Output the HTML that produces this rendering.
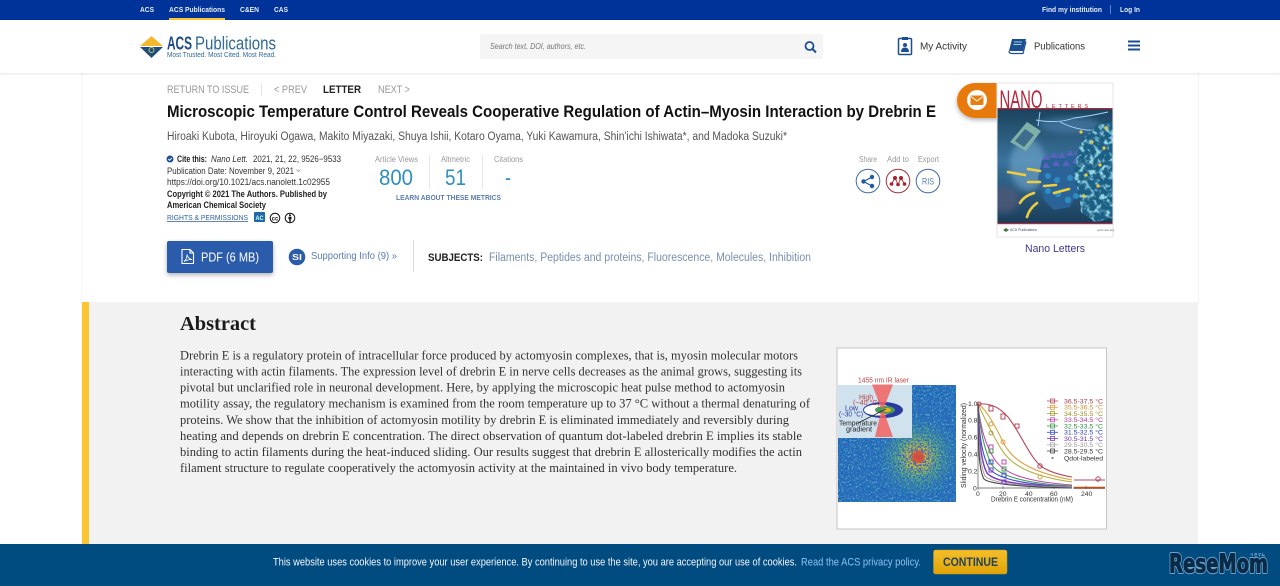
<!DOCTYPE html>
<html lang="en"><head><meta charset="utf-8"><title>Nano Letters</title>
<style>
html,body{margin:0;padding:0;background:#fff;width:1280px;height:586px;overflow:hidden}
svg{display:block;position:absolute;left:0;top:0}
text{font-family:"Liberation Sans","Noto Sans CJK JP",sans-serif;white-space:pre}
.s{font-family:"Liberation Serif",serif}
</style></head><body>
<svg width="1280" height="586" viewBox="0 0 1280 586" xmlns="http://www.w3.org/2000/svg">
<defs>
<filter id="noise" x="0" y="0" width="100%" height="100%">
<feTurbulence type="fractalNoise" baseFrequency="0.6" numOctaves="2" seed="4"/>
<feColorMatrix values="0 0 0 0 .03  0 0 0 0 .12  0 0 0 0 .55  3.4 0 0 0 -1.25"/>
</filter>
<filter id="noise2" x="0" y="0" width="100%" height="100%">
<feTurbulence type="fractalNoise" baseFrequency="0.5" numOctaves="2" seed="11"/>
<feColorMatrix values="0 0 0 0 .2  0 0 0 0 .72  0 0 0 0 .55  2.2 0 0 0 -0.95"/>
</filter>
<filter id="cn" x="0" y="0" width="100%" height="100%">
<feTurbulence type="fractalNoise" baseFrequency="0.2" numOctaves="2" seed="7"/>
<feColorMatrix values="0 0 0 0 .3  0 0 0 0 .7  0 0 0 0 .8  4 0 0 0 -1.9"/>
</filter>
<filter id="sh" x="-20%" y="-20%" width="140%" height="150%"><feDropShadow dx="0" dy="2" stdDeviation="2.500" flood-color="#000" flood-opacity=".3"/></filter>
<filter id="bl"><feGaussianBlur stdDeviation="3"/></filter>
<filter id="bl1"><feGaussianBlur stdDeviation=".8"/></filter>
<filter id="bl2"><feGaussianBlur stdDeviation=".35"/></filter>
<radialGradient id="hot" gradientUnits="userSpaceOnUse" cx="918" cy="457" r="42">
<stop offset="0" stop-color="#e8302a"/><stop offset=".1" stop-color="#ea8a30"/><stop offset=".25" stop-color="#d8cc30" stop-opacity=".95"/><stop offset=".5" stop-color="#70c860" stop-opacity=".75"/><stop offset="1" stop-color="#30a090" stop-opacity="0"/>
</radialGradient>
<linearGradient id="art" x1="0" y1="0" x2="0" y2="1"><stop offset="0" stop-color="#1a425c"/><stop offset=".45" stop-color="#39729c"/><stop offset="1" stop-color="#1a3e5a"/></linearGradient>
<linearGradient id="gold" x1="0" y1="0" x2="0" y2="1"><stop offset="0" stop-color="#f5bf2a"/><stop offset="1" stop-color="#e0a308"/></linearGradient>
<clipPath id="cl"><path d="M1078 150 q4-14 12-18 l8-8 l15-2 v96 l-18 4 -14-10 -2-20 -6-14z"/></clipPath>
<clipPath id="artc"><rect x="997.500" y="108.500" width="115" height="115"/></clipPath>
</defs>

<!-- page frame -->
<rect x="0" y="0" width="1280" height="586" fill="#fff"/>
<rect x="81.500" y="73" width="1" height="472" fill="#f4f4f4"/>
<rect x="1198" y="73" width="1" height="230" fill="#f4f4f4"/>
<rect x="82" y="302" width="1116" height="242" fill="#f2f2f2"/>
<rect x="82" y="302" width="7" height="242" fill="#fdc52f"/>

<!-- header -->
<rect x="0" y="71" width="1280" height="4" fill="#000" opacity=".06" filter="url(#bl1)"/>
<rect x="0" y="20" width="1280" height="53" fill="#fff"/>
<rect x="0" y="0" width="1280" height="20" fill="#003399"/>
<g fill="#e6ecf8" font-size="7.500" font-weight="bold">
<text x="140" y="12" textLength="14" lengthAdjust="spacingAndGlyphs">ACS</text>
<text x="169" y="12" textLength="56" lengthAdjust="spacingAndGlyphs">ACS Publications</text>
<text x="240" y="12" textLength="19" lengthAdjust="spacingAndGlyphs">C&amp;EN</text>
<text x="274" y="12" textLength="14" lengthAdjust="spacingAndGlyphs">CAS</text>
<text x="1042" y="12" textLength="60" lengthAdjust="spacingAndGlyphs">Find my institution</text>
<text x="1120" y="12" textLength="20" lengthAdjust="spacingAndGlyphs">Log In</text>
</g>
<rect x="169" y="18" width="56" height="2" fill="#fdc52f"/>
<rect x="1110" y="5" width="1" height="9" fill="#5f82c6"/>

<!-- logo -->
<path d="M140 46 L151.500 36 L163 46 Z" fill="#f3b92e"/>
<path d="M140 47 L163 47 L151.500 58 Z" fill="#1f4e79"/>
<circle cx="151.500" cy="50" r="2.500" fill="none" stroke="#b9c76a" stroke-width="1"/>
<text x="167" y="49.500" font-size="18" font-weight="bold" fill="#1f4e86" textLength="25" lengthAdjust="spacingAndGlyphs">ACS</text>
<text x="195" y="49.500" font-size="18" fill="#2f6a98" textLength="81" lengthAdjust="spacingAndGlyphs">Publications</text>
<text x="167" y="57" font-size="7" fill="#2f6a98" textLength="109" lengthAdjust="spacingAndGlyphs">Most Trusted. Most Cited. Most Read.</text>

<!-- search -->
<rect x="480" y="34" width="343" height="25" rx="2" fill="#f5f5f5"/>
<text x="490" y="49" font-size="8" font-style="italic" fill="#777" textLength="96" lengthAdjust="spacingAndGlyphs">Search text, DOI, authors, etc.</text>
<circle cx="809.500" cy="46" r="4" fill="none" stroke="#1b4f91" stroke-width="1.800"/>
<path d="M812.500 49 L816 52.500" stroke="#1b4f91" stroke-width="2"/>

<!-- my activity -->
<path d="M899.500 38.500h11a1 1 0 0 1 1 1v14a1 1 0 0 1-1 1h-11a1 1 0 0 1-1-1v-14a1 1 0 0 1 1-1z" fill="none" stroke="#1b4f91" stroke-width="1.500"/>
<rect x="902" y="37" width="6" height="3" fill="#1b4f91"/>
<circle cx="905" cy="45" r="2" fill="#1b4f91"/>
<path d="M901 52 q0-4.500 4-4.500 t4 4.500z" fill="#1b4f91"/>
<text x="920" y="49.500" font-size="10.500" fill="#333" textLength="47" lengthAdjust="spacingAndGlyphs">My Activity</text>
<path d="M1012 39 h14 l-3 12 h-14 z" fill="#1b4f91"/>
<path d="M1009 51 q0 2.500 3 2.500 h11 l3-12" fill="none" stroke="#1b4f91" stroke-width="1.200"/>
<path d="M1014 42h8M1013.500 44.500h8" stroke="#cfe" stroke-width=".8"/>
<text x="1034" y="49.500" font-size="10.500" fill="#333" textLength="51" lengthAdjust="spacingAndGlyphs">Publications</text>
<path d="M1128 41.500h12M1128 45.500h12M1128 49.500h12" stroke="#1b4f91" stroke-width="2"/>

<!-- breadcrumb -->
<g font-size="11" fill="#999">
<text x="167" y="93" textLength="82" lengthAdjust="spacingAndGlyphs">RETURN TO ISSUE</text>
<text x="274" y="93" textLength="33" lengthAdjust="spacingAndGlyphs">&lt; PREV</text>
<text x="378" y="93" textLength="32" lengthAdjust="spacingAndGlyphs">NEXT &gt;</text>
</g>
<rect x="261" y="83" width="1" height="13" fill="#e6e6e6"/>
<text x="323" y="93" font-size="11" font-weight="bold" fill="#222" textLength="38" lengthAdjust="spacingAndGlyphs">LETTER</text>

<!-- title -->
<text x="167" y="117" font-size="16.500" font-weight="bold" fill="#111" textLength="769" lengthAdjust="spacingAndGlyphs">Microscopic Temperature Control Reveals Cooperative Regulation of Actin–Myosin Interaction by Drebrin E</text>
<text x="167" y="140" font-size="11.500" fill="#555" textLength="620" lengthAdjust="spacingAndGlyphs">Hiroaki Kubota, Hiroyuki Ogawa, Makito Miyazaki, Shuya Ishii, Kotaro Oyama, Yuki Kawamura, Shin'ichi Ishiwata*, and Madoka Suzuki*</text>

<!-- citation -->
<circle cx="170" cy="159" r="3.500" fill="#1f4e9a"/>
<path d="M168.300 159 l1.300 1.300 l2.200-2.400" fill="none" stroke="#fff" stroke-width=".9"/>
<g font-size="9" fill="#333">
<text x="177" y="162" font-weight="bold" fill="#222" textLength="30" lengthAdjust="spacingAndGlyphs">Cite this:</text>
<text x="211" y="162" font-style="italic" textLength="37" lengthAdjust="spacingAndGlyphs">Nano Lett.</text>
<text x="253" y="162" textLength="88" lengthAdjust="spacingAndGlyphs">2021, 21, 22, 9526−9533</text>
<text x="167" y="174" textLength="127" lengthAdjust="spacingAndGlyphs">Publication Date: November 9, 2021</text>
<text x="167" y="185" textLength="163" lengthAdjust="spacingAndGlyphs">https://doi.org/10.1021/acs.nanolett.1c02955</text>
<text x="167" y="197" font-weight="bold" fill="#222" textLength="160" lengthAdjust="spacingAndGlyphs">Copyright © 2021 The Authors. Published by</text>
<text x="167" y="208" font-weight="bold" fill="#222" textLength="99" lengthAdjust="spacingAndGlyphs">American Chemical Society</text>
</g>
<path d="M296.500 169.500l2 2 2-2" fill="none" stroke="#888" stroke-width=".7"/>
<text x="167" y="220" font-size="7.500" fill="#2f5f9e" text-decoration="underline" textLength="81" lengthAdjust="spacingAndGlyphs">RIGHTS &amp; PERMISSIONS</text>
<rect x="254" y="212" width="11" height="10" rx="1" fill="#1d6aa5"/>
<text x="255.500" y="220" font-size="6.500" font-weight="bold" fill="#dff" textLength="8" lengthAdjust="spacingAndGlyphs">AC</text>
<circle cx="275" cy="218" r="4.800" fill="#fff" stroke="#111" stroke-width="1"/>
<text x="271.800" y="220.300" font-size="6" font-weight="bold" fill="#111" textLength="6.400" lengthAdjust="spacingAndGlyphs">cc</text>
<circle cx="290" cy="218" r="4.800" fill="#fff" stroke="#111" stroke-width="1"/>
<circle cx="290" cy="215.300" r="1" fill="#111"/><path d="M288.500 216.800h3v2.500h-.8v2.800h-1.400v-2.800h-.8z" fill="#111"/>

<!-- metrics -->
<g font-size="8.500" fill="#999">
<text x="375" y="162" textLength="43" lengthAdjust="spacingAndGlyphs">Article Views</text>
<text x="441" y="162" textLength="29" lengthAdjust="spacingAndGlyphs">Altmetric</text>
<text x="494" y="162" textLength="29" lengthAdjust="spacingAndGlyphs">Citations</text>
</g>
<g font-size="22.500" fill="#2f8fc0">
<text x="379" y="185" textLength="34" lengthAdjust="spacingAndGlyphs">800</text>
<text x="445" y="185" textLength="21" lengthAdjust="spacingAndGlyphs">51</text>
<text x="505" y="185" textLength="6" lengthAdjust="spacingAndGlyphs">-</text>
</g>
<rect x="429" y="154" width="1" height="36" fill="#e8e8e8"/>
<rect x="482" y="154" width="1" height="36" fill="#e8e8e8"/>
<text x="396" y="200" font-size="7.500" font-weight="bold" fill="#4a6fa8" opacity=".9" textLength="105" lengthAdjust="spacingAndGlyphs">LEARN ABOUT THESE METRICS</text>

<!-- share/add/export -->
<g font-size="8" fill="#999">
<text x="859" y="162" textLength="18" lengthAdjust="spacingAndGlyphs">Share</text>
<text x="887" y="162" textLength="22" lengthAdjust="spacingAndGlyphs">Add to</text>
<text x="918" y="162" textLength="21" lengthAdjust="spacingAndGlyphs">Export</text>
</g>
<circle cx="868" cy="181" r="11.800" fill="#fff" stroke="#3f6ea8" stroke-width="1"/>
<circle cx="898" cy="181" r="11.800" fill="#fff" stroke="#a83238" stroke-width="1"/>
<circle cx="928" cy="181" r="11.800" fill="#fff" stroke="#3f6ea8" stroke-width="1"/>
<g fill="#1f5aa0" stroke="#1f5aa0"><path d="M872 177 L863.500 181.500 L872 186" fill="none" stroke-width="1.200"/><circle cx="872" cy="177" r="1.700"/><circle cx="863.500" cy="181.500" r="1.700"/><circle cx="872" cy="186" r="1.700"/></g>
<g fill="#a61f2a"><circle cx="895" cy="178" r="2"/><circle cx="901" cy="178" r="2"/><circle cx="891.500" cy="184" r="1.800"/><circle cx="898" cy="184.500" r="1.800"/><circle cx="904.500" cy="184" r="1.800"/></g>
<path d="M895 178L891.500 184M895 178L898 184.500M901 178L898 184.500M901 178L904.500 184" stroke="#a61f2a" stroke-width=".8"/>
<text x="922" y="184.500" font-size="9.500" fill="#557aa8" textLength="12" lengthAdjust="spacingAndGlyphs">RIS</text>

<!-- pdf btn -->
<rect x="167" y="241" width="106" height="32" rx="2" fill="#2a5cab" filter="url(#sh)"/>
<path d="M182 249.500h8l3.500 3.500v10.500h-11.500z M190 249.500v3.500h3.500" fill="none" stroke="#fff" stroke-width="1.100"/>
<path d="M184 261.500c2-1.500 3-4 3-7 .6 3 2 4.500 5 5-3 0-5.500.6-8 2z" fill="none" stroke="#fff" stroke-width=".8"/>
<text x="201" y="261.500" font-size="13" fill="#fff" textLength="58" lengthAdjust="spacingAndGlyphs">PDF (6 MB)</text>
<circle cx="297" cy="257" r="8.300" fill="#2a5cab"/>
<text x="292" y="260" font-size="8" font-weight="bold" fill="#fff" textLength="10" lengthAdjust="spacingAndGlyphs">SI</text>
<text x="311" y="259" font-size="10.500" fill="#5a7cb0" textLength="86" lengthAdjust="spacingAndGlyphs">Supporting Info (9) »</text>
<rect x="413" y="240" width="1" height="32" fill="#dcdcdc"/>
<text x="428" y="261" font-size="11" font-weight="bold" fill="#222" textLength="55" lengthAdjust="spacingAndGlyphs">SUBJECTS:</text>
<text x="489" y="261" font-size="11.500" fill="#7890b0" textLength="322" lengthAdjust="spacingAndGlyphs">Filaments, Peptides and proteins, Fluorescence, Molecules, Inhibition</text>

<!-- cover -->
<path d="M975 83 h26 v35 h-26 a18 17.500 0 0 1 0-35z" fill="#e87a08" filter="url(#sh)"/>
<rect x="997" y="83" width="116" height="154" fill="#fff" stroke="#e6e6e6" stroke-width="1"/>
<circle cx="977" cy="100" r="10" fill="#fff"/>
<rect x="970.500" y="95.500" width="13" height="9.500" rx="1" fill="#ea7d10"/>
<path d="M971 96.500l6 4.500 6-4.500" fill="none" stroke="#fff" stroke-width="1"/>
<text x="999.500" y="108" font-size="25" fill="#b8253a" textLength="43" lengthAdjust="spacingAndGlyphs">NANO</text>
<text x="1046" y="108" font-size="5.500" fill="#b8253a" textLength="42" lengthAdjust="spacing">LETTERS</text>
<rect x="997.500" y="108.500" width="115" height="115" fill="url(#art)"/>
<rect x="997.500" y="108" width="115" height="1.200" fill="#b8253a"/>
<rect x="997.500" y="223" width="115" height="1.200" fill="#b8253a"/>
<g clip-path="url(#artc)">
<g filter="url(#bl)">
<ellipse cx="1028" cy="165" rx="18" ry="26" fill="#7fb4d8" opacity=".5"/>
<ellipse cx="1005" cy="200" rx="14" ry="13" fill="#55587a" opacity=".7"/>
<ellipse cx="1070" cy="125" rx="30" ry="8" fill="#5f9ccc" opacity=".4"/>
</g>
<g filter="url(#bl2)">
<path d="M1036 120 q22 4 38 -2 q16-2 34-6 M1040 112 l-2 14 M1060 122 q20 10 40 8" stroke="#a9d6f8" stroke-width=".9" fill="none"/>
<path d="M1010 142 l17-20 14 9 -15 20z" fill="#7fb0a8"/>
<path d="M1015 141 l10-12 9 6 -10 12z" fill="#3d6c8c"/>
<g fill="#2a6498"><path d="M1042 160 l14 -4 14 -1 14 -2 v14 l-6 24 -8 16 -16 3 -10-10 -6-22z"/></g>
<g fill="#5a62bc"><path d="M1042 160l4-6 4 6zM1050 158l4-6 4 6zM1058 158l4-6 4 6zM1066 156l4-6 4 6zM1074 155l4-6 4 6zM1042 168l4-6 4 6zM1052 166l4-6 4 6zM1062 166l4-6 4 6zM1072 163l4-6 4 6z"/></g>
<g fill="#2f8cc0"><circle cx="1048" cy="176" r="3"/><circle cx="1057" cy="180" r="3"/><circle cx="1048" cy="191" r="3"/><circle cx="1058" cy="194" r="3.200"/><circle cx="1068" cy="200" r="3.200"/><circle cx="1076" cy="196" r="3"/><circle cx="1070" cy="178" r="3"/><circle cx="1080" cy="176" r="3"/></g>
<rect x="1072" y="120" width="41" height="104" fill="#1f5f85" clip-path="url(#cl)"/>
<g clip-path="url(#cl)"><rect x="1072" y="120" width="41" height="104" filter="url(#cn)"/></g>
<g fill="#ecc93f"><circle cx="1092" cy="142" r="1.600"/><circle cx="1104" cy="148" r="1.600"/><circle cx="1100" cy="165" r="1.600"/><circle cx="1086" cy="175" r="1.600"/><circle cx="1106" cy="128" r="1.600"/><circle cx="1084" cy="196" r="1.600"/><circle cx="1098" cy="186" r="1.600"/><circle cx="1081" cy="132" r="1.600"/></g>
<g stroke="#efcb3f" stroke-width="2.600" stroke-linecap="round" fill="none"><path d="M1008 172 l17 3"/><path d="M1028 169 l12 2"/><path d="M1028 182 l12 0"/><path d="M1044 186 l12-1"/><path d="M1054 193 l15-4"/><path d="M1020 203 q4-7 14-10"/><path d="M1027 217 q2-8 10-14"/></g>
</g>
</g>
<path d="M1003 230 l3-2 3 2 -3 2z" fill="#4a7a3a"/>
<text x="1010" y="231" font-size="3.500" fill="#446">ACS Publications</text>
<text x="1097" y="231" font-size="3" fill="#666">pubs.acs.org</text>
<text x="1025" y="252" font-size="11" fill="#3d3a8c" textLength="60" lengthAdjust="spacingAndGlyphs">Nano Letters</text>

<!-- abstract -->
<text class="s" x="180" y="330" font-size="19.500" font-weight="bold" fill="#1a1a1a" textLength="76" lengthAdjust="spacingAndGlyphs">Abstract</text>
<g font-size="12.600" fill="#333">
<text class="s" x="180" y="359.500" textLength="618" lengthAdjust="spacingAndGlyphs">Drebrin E is a regulatory protein of intracellular force produced by actomyosin complexes, that is, myosin molecular motors</text>
<text class="s" x="180" y="375.500" textLength="622" lengthAdjust="spacingAndGlyphs">interacting with actin filaments. The expression level of drebrin E in nerve cells decreases as the animal grows, suggesting its</text>
<text class="s" x="180" y="391.500" textLength="605" lengthAdjust="spacingAndGlyphs">pivotal but unclarified role in neuronal development. Here, by applying the microscopic heat pulse method to actomyosin</text>
<text class="s" x="180" y="407.500" textLength="630" lengthAdjust="spacingAndGlyphs">motility assay, the regulatory mechanism is examined from the room temperature up to 37 °C without a thermal denaturing of</text>
<text class="s" x="180" y="424" textLength="609" lengthAdjust="spacingAndGlyphs">proteins. We show that the inhibition of actomyosin motility by drebrin E is eliminated immediately and reversibly during</text>
<text class="s" x="180" y="440" textLength="622" lengthAdjust="spacingAndGlyphs">heating and depends on drebrin E concentration. The direct observation of quantum dot-labeled drebrin E implies its stable</text>
<text class="s" x="180" y="456" textLength="622" lengthAdjust="spacingAndGlyphs">binding to actin filaments during the heat-induced sliding. Our results suggest that drebrin E allosterically modifies the actin</text>
<text class="s" x="180" y="472" textLength="557" lengthAdjust="spacingAndGlyphs">filament structure to regulate cooperatively the actomyosin activity at the maintained in vivo body temperature.</text>
</g>

<!-- graphic -->
<rect x="837" y="348" width="269.500" height="181" fill="#fff" stroke="#c4c4c4" stroke-width="1"/>
<g filter="url(#bl2)">
<rect x="838" y="385" width="118" height="117" fill="#1670b0"/>
<rect x="838" y="385" width="118" height="117" filter="url(#noise2)"/>
<rect x="838" y="385" width="118" height="117" fill="url(#hot)"/>
<rect x="838" y="385" width="118" height="117" filter="url(#noise)"/>
<circle cx="918" cy="457" r="6" fill="#e84a2a" opacity=".7"/>
<rect x="838" y="385" width="74" height="53" fill="#cfe2ee"/>
<ellipse cx="883" cy="410" rx="20" ry="8" fill="#2b3aa0"/>
<ellipse cx="878" cy="410" rx="14" ry="5.500" fill="#fff"/>
<ellipse cx="885" cy="410" rx="10" ry="4" fill="#4a9c5a"/>
<ellipse cx="887" cy="410" rx="4" ry="2" fill="#f0b020"/>
<path d="M872 384.500 h21 l-9 23 h-3z" fill="#f2605f" opacity=".85"/>
<path d="M881 412 h3 l9 25 h-18z" fill="#f2605f" opacity=".85"/>
<path d="M886 409 L858 423" stroke="#222" stroke-width=".7"/>
<g font-size="7">
<text x="858" y="382.500" fill="#c24040" textLength="51" lengthAdjust="spacingAndGlyphs">1455 nm IR laser</text>
<text x="859" y="399.500" fill="#c24040" textLength="14" lengthAdjust="spacingAndGlyphs">High</text>
<text x="853" y="405" fill="#c24040" textLength="27" lengthAdjust="spacingAndGlyphs">(~40 °C)</text>
<text x="845" y="410.500" fill="#2a3a9a" textLength="13" lengthAdjust="spacingAndGlyphs">Low</text>
<text x="839" y="416.500" fill="#2a3a9a" textLength="24" lengthAdjust="spacingAndGlyphs">(~30 °C)</text>
<text x="839" y="425.500" fill="#222" textLength="38" lengthAdjust="spacingAndGlyphs">Temperature</text>
<text x="846" y="431.500" fill="#222" textLength="26" lengthAdjust="spacingAndGlyphs">gradient</text>
</g>
<!-- chart -->
<path d="M978 402 V488 H1072 M1073 488 H1105" fill="none" stroke="#555" stroke-width=".7"/>
<g fill="none" stroke-width="1.100">
<path d="M978 404 C992 403 1000 408 1008 417 C1020 432 1030 458 1042 467 C1050 472 1060 475 1072 477 M1074 480H1105" stroke="#b84a58"/>
<path d="M978 404 C985 408 995 425 1003 442 C1012 460 1030 472 1072 480 M1074 487H1105" stroke="#e0a040"/>
<path d="M978 404 C983 415 990 430 1000 447 C1010 465 1030 476 1072 482" stroke="#b8b040"/>
<path d="M978 404 C980 425 985 445 995 460 C1005 475 1030 482 1072 485" stroke="#c04ab0"/>
<path d="M978 404 C980 430 984 450 992 465 C1000 477 1030 484 1072 486" stroke="#3c9a50"/>
<path d="M978 404 C979 435 982 455 989 468 C997 480 1030 485 1072 487" stroke="#3a50c8"/>
<path d="M978 404 C979 440 981 462 987 473 C995 483 1030 486 1072 487" stroke="#8040c0" stroke-width="1.500"/>
<path d="M978 404 C978 445 980 465 985 476 C992 484 1030 487 1072 487" stroke="#aaa"/>
<path d="M978 404 C978 450 979 470 984 479 C990 485 1030 487 1072 488" stroke="#444"/>
<path d="M1074 488H1105" stroke="#a03a30" stroke-width="1.500"/>
</g>
<g fill="none" stroke-width="1">
<circle cx="979" cy="404" r="2" stroke="#b84a58"/><rect x="989" y="406" width="4" height="5" stroke="#b84a58"/><rect x="1001" y="414" width="4" height="5" stroke="#b84a58"/><rect x="1015" y="424" width="4" height="4" stroke="#b84a58"/><circle cx="1040" cy="466" r="2.200" stroke="#b84a58"/><circle cx="1098" cy="479" r="2.200" stroke="#b84a58"/>
<circle cx="991" cy="424" r="2" stroke="#d8a040"/><circle cx="1003" cy="442" r="2" stroke="#d8a040"/><circle cx="1040" cy="477" r="2" stroke="#d8a040"/><circle cx="991" cy="433" r="2" stroke="#a8a040"/>
<rect x="989" y="445" width="4" height="4" stroke="#c04ab0"/><rect x="1002" y="460" width="4" height="4" stroke="#c04ab0"/><rect x="989" y="449" width="4" height="4" stroke="#3c9a50"/><rect x="1002" y="467" width="4" height="4" stroke="#3c9a50"/><rect x="989" y="460" width="4" height="4" stroke="#3a50c8"/><rect x="1002" y="473" width="4" height="4" stroke="#3a50c8"/><rect x="989" y="468" width="4" height="4" stroke="#8040c0"/><rect x="1002" y="480" width="4" height="4" stroke="#8040c0"/>
</g>
<path d="M978 488v2M1003 486v3M1029 486v3M1054 486v3M1086 486v3" stroke="#555" stroke-width=".6"/>
<g font-size="6.800" fill="#333">
<text x="968" y="406">1.0</text><text x="968" y="422.500">0.8</text><text x="968" y="439.500">0.6</text><text x="968" y="456.500">0.4</text><text x="968" y="473.500">0.2</text><text x="973" y="490.500">0</text>
<text x="976" y="496">0</text><text x="999" y="496">20</text><text x="1025" y="496">40</text><text x="1050" y="496">60</text><text x="1081" y="496">240</text>
<text x="991" y="501.500" font-size="7" textLength="82" lengthAdjust="spacingAndGlyphs">Drebrin E concentration (nM)</text>
<text transform="translate(966 488) rotate(-90)" font-size="7" textLength="85" lengthAdjust="spacingAndGlyphs" x="0" y="0">Sliding velocity (normalized)</text>
</g>
<g font-size="6.500" stroke-width=".8" fill="none">
<path d="M1047 401h11" stroke="#b84a58"/><path d="M1047 407.300h11" stroke="#e0a040"/><path d="M1047 413.500h11" stroke="#a8a030"/><path d="M1047 419.800h11" stroke="#c04ab0"/><path d="M1047 426h11" stroke="#3c9a50"/><path d="M1047 432.300h11" stroke="#3a50c8"/><path d="M1047 438.500h11" stroke="#8040c0"/><path d="M1047 444.800h11" stroke="#aaa"/><path d="M1047 451h11" stroke="#444"/>
<rect x="1050.500" y="399" width="4" height="4" stroke="#b84a58"/><rect x="1050.500" y="405.300" width="4" height="4" stroke="#e0a040"/><rect x="1050.500" y="411.500" width="4" height="4" stroke="#a8a030"/><rect x="1050.500" y="417.800" width="4" height="4" stroke="#c04ab0"/><rect x="1050.500" y="424" width="4" height="4" stroke="#3c9a50"/><rect x="1050.500" y="430.300" width="4" height="4" stroke="#3a50c8"/><rect x="1050.500" y="436.500" width="4" height="4" stroke="#8040c0"/><rect x="1050.500" y="442.800" width="4" height="4" stroke="#aaa"/><rect x="1050.500" y="449" width="4" height="4" stroke="#444"/>
<g stroke="none">
<text x="1064" y="403.300" fill="#a83a48" textLength="39" lengthAdjust="spacingAndGlyphs">36.5-37.5 °C</text>
<text x="1064" y="409.500" fill="#d09030" textLength="39" lengthAdjust="spacingAndGlyphs">35.5-36.5 °C</text>
<text x="1064" y="415.800" fill="#989020" textLength="39" lengthAdjust="spacingAndGlyphs">34.5-35.5 °C</text>
<text x="1064" y="422" fill="#b03aa0" textLength="39" lengthAdjust="spacingAndGlyphs">33.5-34.5 °C</text>
<text x="1064" y="428.300" fill="#2c8a40" textLength="39" lengthAdjust="spacingAndGlyphs">32.5-33.5 °C</text>
<text x="1064" y="434.500" fill="#2a40b8" textLength="39" lengthAdjust="spacingAndGlyphs">31.5-32.5 °C</text>
<text x="1064" y="440.800" fill="#7030b0" textLength="39" lengthAdjust="spacingAndGlyphs">30.5-31.5 °C</text>
<text x="1064" y="447" fill="#999" textLength="39" lengthAdjust="spacingAndGlyphs">29.5-30.5 °C</text>
<text x="1064" y="453.300" fill="#333" textLength="39" lengthAdjust="spacingAndGlyphs">28.5-29.5 °C</text>
<text x="1064" y="460.300" fill="#333" textLength="39" lengthAdjust="spacingAndGlyphs">Qdot-labeled</text>
<circle cx="1052.500" cy="458" r="1" fill="#666"/>
</g>
</g>
</g>

<!-- cookie -->
<rect x="0" y="544" width="1280" height="42" fill="#004b80"/>
<text x="273" y="565.500" font-size="11" fill="#f2f6fa" textLength="524" lengthAdjust="spacingAndGlyphs">This website uses cookies to improve your user experience. By continuing to use the site, you are accepting our use of cookies.</text>
<text x="801" y="565.500" font-size="11" fill="#8fc3ee" textLength="120" lengthAdjust="spacingAndGlyphs">Read the ACS privacy policy.</text>
<rect x="933.500" y="550" width="73.500" height="24" rx="2" fill="url(#gold)" stroke="#c99a12" stroke-width=".5"/>
<text x="943" y="566" font-size="12" font-weight="bold" fill="#20425a" textLength="55" lengthAdjust="spacingAndGlyphs">CONTINUE</text>

<!-- watermark -->
<text x="1169" y="572.500" font-size="26" font-weight="bold" fill="none" stroke="#6aa6cc" stroke-width="3" stroke-linejoin="round" textLength="99" lengthAdjust="spacingAndGlyphs" style="font-family:'DejaVu Sans',sans-serif">ReseMom</text>
<text x="1169" y="572.500" font-size="26" font-weight="bold" fill="#0a2a48" stroke="#0a2a48" stroke-width="1" textLength="99" lengthAdjust="spacingAndGlyphs" style="font-family:'DejaVu Sans',sans-serif">ReseMom</text>
<text x="1250" y="556" font-size="4" fill="#cfe2f0" textLength="15" lengthAdjust="spacingAndGlyphs">リセマム</text>
</svg>
</body></html>
